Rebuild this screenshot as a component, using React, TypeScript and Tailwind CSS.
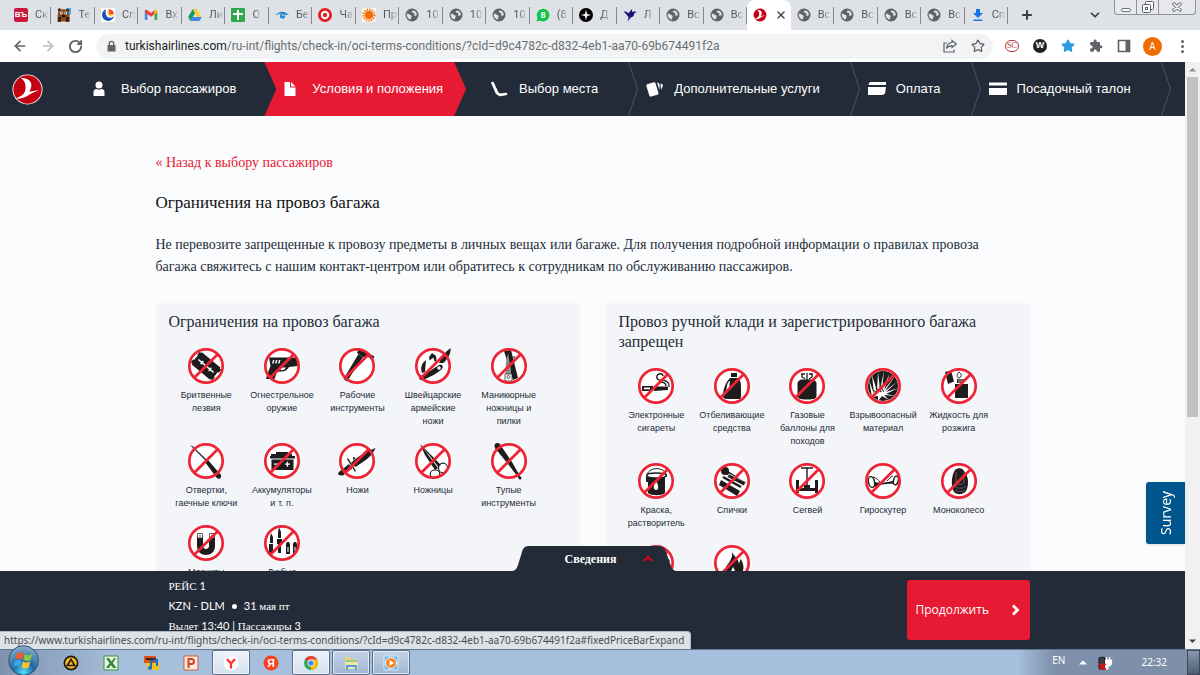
import React from 'react';
import clsx from 'clsx';
import { ArrowLeft, ArrowRight, RotateCw, Lock, Star, ChevronDown, Plus, X } from 'lucide-react';

const PAGE_URL = 'turkishairlines.com/ru-int/flights/check-in/oci-terms-conditions/?cId=d9c4782c-d832-4eb1-aa70-69b674491f2a';
const PAGE_HOST = 'turkishairlines.com';

/* ---------- Favicons ---------- */

const Favicon: React.FC<{ children: React.ReactNode }> = ({ children }) => (
    <svg viewBox="0 0 14 14" className="size-3.5 shrink-0" aria-hidden="true">
        {children}
    </svg>
);

const Globe = () => (
    <Favicon>
        <circle cx="7" cy="7" r="6.5" fill="#5f6368" />
        <path d="M1.8 5.800c1.500-.4 2.500.2 3 1 .5.600 1.800.3 1.900 1.500.1 1-.9 1.200-.7 3.300C3.200 11.400 1.300 8.600 1.800 5.800z" fill="#dee1e6" />
        <path d="M8.500 2.500c-1.700 0-2.300 1.200-1.400 1.900.7.5 1.900.1 2.300 1 .3.900-.8 1-.5 1.900.4.800 1.900.3 2.900-.1.300-2.400-1.200-4.200-3.300-4.700z" fill="#dee1e6" />
    </Favicon>
);

const TurkishMark: React.FC<{ className?: string }> = ({ className }) => (
    <svg viewBox="0 0 32 32" className={className} aria-hidden="true">
        <circle cx="16" cy="16" r="15.500" fill="#fff" />
        <circle cx="16" cy="16" r="14.600" fill="#c40012" />
        <path d="M8.500 3.800c6 .2 11.500 2.500 11.500 7.200 0 3-1 5.200-2.200 7.200 3.500-.3 6-1.200 9.700-1.400-4 1.600-7 3-10.500 5.200-4.500 2.800-8.500 4-14 3.300 5.500-1.500 9.500-4.300 10.600-8C14.500 13 14.500 7 8.500 3.800z" fill="#fff" />
    </svg>
);

const favicons: Record<string, React.ReactNode> = {
    vb: (
        <span className="flex size-3.5 shrink-0 items-center justify-center rounded-[2px] bg-[#c8193c] font-['Liberation_Sans'] text-[8px] leading-none font-bold text-white">
            ВЪ
        </span>
    ),
    bear: (
        <Favicon>
            <path d="M9 0h5v6l-3 2z" fill="#3fa9f5" />
            <circle cx="2.500" cy="2" r="1.700" fill="#3b1d0b" />
            <circle cx="10.500" cy="2.500" r="1.700" fill="#3b1d0b" />
            <path d="M1.500 3C3 .8 10 .8 11.500 3l1 4.500-.7 6H1l-.5-6z" fill="#8a4a1c" />
            <path d="M1 9h3v4.800H.5zM9 9h3.500v4.800H9z" fill="#3b1d0b" />
            <circle cx="4.600" cy="5" r="1.500" fill="#fff" />
            <circle cx="8.600" cy="5" r="1.500" fill="#fff" />
            <circle cx="4.800" cy="5" r=".7" />
            <circle cx="8.400" cy="5" r=".7" />
            <ellipse cx="6.600" cy="8" rx="2" ry="1.400" fill="#2b1407" />
        </Favicon>
    ),
    sputnik: (
        <Favicon>
            <rect width="14" height="14" fill="#fff" />
            <path d="M5 1.300A6 6 0 1 0 13 8c-2 2.400-5.800 2.400-7.300.2C4.300 6 4.300 3.500 5 1.300z" fill="#1751b5" />
            <path d="M7.500 1a6 6 0 0 1 5.600 5.300L8 6.500z" fill="#f4511e" />
            <path d="M6.300 2.500 8 6.600l4.800.2c-2 1.500-5 1.300-6-.6z" fill="#ffb300" />
        </Favicon>
    ),
    gmail: (
        <Favicon>
            <path d="M.8 3v9h2.600V6z" fill="#4285f4" />
            <path d="M13.200 3v9h-2.600V6z" fill="#34a853" />
            <path d="M.8 3.200c0-1.300 1.500-1.800 2.600-1L7 5l3.600-2.800v3.900L7 8.800.8 4.500z" fill="#ea4335" />
            <path d="M10.600 2.200c1.100-.8 2.600-.3 2.600 1v1.300l-2.600 1.900z" fill="#fbbc04" />
        </Favicon>
    ),
    drive: (
        <Favicon>
            <path d="M4.700 1.300h4.600L4.700 9.200 2.400 13 .2 9z" fill="#0f9d58" />
            <path d="M4.700 1.300h4.600L13.800 9H9.300z" fill="#ffcd40" />
            <path d="M4.700 9h9.100l-2.300 4H2.400z" fill="#4285f4" />
        </Favicon>
    ),
    sheet: (
        <Favicon>
            <rect width="14" height="14" rx="1" fill="#2fa84f" />
            <path d="M6 2h2v3h4v2H8v5H6V7H2V5h4z" fill="#fff" />
        </Favicon>
    ),
    eye: (
        <Favicon>
            <path d="M0 7.500C3 4 7 2.800 10 4.300c2 .9 3 2.200 4 2.700-1.500.3-2.700 0-3.800-.5C7.500 5.200 3.500 5.800 0 7.500z" fill="#1e88d2" />
            <circle cx="7.500" cy="8" r="2.600" fill="#1e88d2" />
            <circle cx="8" cy="7.300" r=".9" fill="#dee1e6" />
        </Favicon>
    ),
    target: (
        <Favicon>
            <circle cx="7" cy="7" r="7" fill="#e31e24" />
            <circle cx="7" cy="7" r="4.200" fill="#fff" />
            <circle cx="7" cy="7" r="2.200" fill="#e31e24" />
        </Favicon>
    ),
    sun: (
        <Favicon>
            <rect width="14" height="14" fill="#fdf6ec" />
            <circle cx="7" cy="7" r="5.400" fill="none" stroke="#f2801e" strokeWidth="2.400" strokeDasharray="1.400 1.100" />
            <circle cx="7" cy="7" r="4" fill="#ef6c0a" />
        </Favicon>
    ),
    globe: <Globe />,
    wa: (
        <Favicon>
            <path d="M.6 13.500 1.500 10A6.300 6.300 0 1 1 4 12.600z" fill="#10c34b" />
            <text x="7" y="10.200" textAnchor="middle" fontSize="9" fontWeight="700" fontFamily="Liberation Sans, sans-serif" fill="#fff">8</text>
        </Favicon>
    ),
    spark: (
        <Favicon>
            <circle cx="7" cy="7" r="7" />
            <path d="M7 1.800 8.100 5.900 12.200 7 8.100 8.100 7 12.200 5.900 8.100 1.800 7l4.100-1.100z" fill="#fff" />
        </Favicon>
    ),
    bird: (
        <Favicon>
            <path d="M.5 3.200c2 0 3.700.7 5 2L9 1l.3 3.200 2.200-1 2.300 1-2.500.8c0 2.500-1 4-3.600 4.600L4.500 13.500 5.600 9C4 7.500 3 5.500.5 3.200z" fill="#15157a" />
        </Favicon>
    ),
    thy: <TurkishMark className="size-3.5 shrink-0" />,
    download: (
        <Favicon>
            <path d="M5 1h4v4h3L7 10 2 5h3zM2.500 11.500h9V13h-9z" fill="#1a73e8" />
        </Favicon>
    ),
};

const tabs: { icon: string; label: string; active?: boolean }[] = [
    { icon: 'vb', label: 'Ск' },
    { icon: 'bear', label: 'Те' },
    { icon: 'sputnik', label: 'Сп' },
    { icon: 'gmail', label: 'Вх' },
    { icon: 'drive', label: 'Ли' },
    { icon: 'sheet', label: 'О' },
    { icon: 'eye', label: 'Бе' },
    { icon: 'target', label: 'Ча' },
    { icon: 'sun', label: 'Пр' },
    { icon: 'globe', label: '10' },
    { icon: 'globe', label: '10' },
    { icon: 'globe', label: '10' },
    { icon: 'wa', label: '(8' },
    { icon: 'spark', label: 'Д' },
    { icon: 'bird', label: 'Л' },
    { icon: 'globe', label: 'Вс' },
    { icon: 'globe', label: 'Вс' },
    { icon: 'thy', label: '', active: true },
    { icon: 'globe', label: 'Вс' },
    { icon: 'globe', label: 'Вс' },
    { icon: 'globe', label: 'Вс' },
    { icon: 'globe', label: 'Вс' },
    { icon: 'download', label: 'Сп' },
];

/* ---------- Browser chrome ---------- */

const TabStrip = () => (
    <div className="flex h-[30px] shrink-0 bg-[#dee1e6] pl-2">
        <div className="flex min-w-0 flex-1">
            {tabs.map((tab, i) => (
                <button
                    key={i}
                    className={clsx('flex min-w-0 flex-1 items-center pl-1.5', tab.active && 'rounded-t-lg bg-white')}
                    aria-label={tab.active ? 'Turkish Airlines' : undefined}
                >
                    {favicons[tab.icon]}
                    {tab.active ? (
                        <X className="ml-2 size-3 text-[#45494d]" strokeWidth={3} />
                    ) : (
                        <>
                            <span className="ml-[7px] bg-linear-to-r from-[#4f5357] from-40% to-[#c9ccd1] bg-clip-text font-['Roboto',sans-serif] text-[11px] whitespace-nowrap text-transparent">
                                {tab.label}
                            </span>
                            <span className="ml-auto h-[17px] w-px shrink-0 bg-[#85888d]" />
                        </>
                    )}
                </button>
            ))}
        </div>
        <div className="flex w-[192px] shrink-0 items-center pl-3">
            <button aria-label="Новая вкладка">
                <Plus className="size-3.5 text-[#3c4043]" strokeWidth={3.500} />
            </button>
            <button aria-label="Поиск вкладок" className="ml-[54px]">
                <ChevronDown className="size-3.5 text-[#3c4043]" strokeWidth={3} />
            </button>
            <div className="ml-3 flex h-[15px] w-[82px] self-start rounded-b border border-t-0 border-[#8f9399] bg-[#e6e8ec]">
                <button aria-label="Свернуть" className="flex flex-1 items-end justify-center border-r border-[#8f9399] pb-0.5">
                    <span className="h-1 w-2.5 rounded-xs border border-[#6d7178] bg-white" />
                </button>
                <button aria-label="Развернуть" className="flex flex-1 items-center justify-center border-r border-[#8f9399]">
                    <svg viewBox="0 0 12 12" className="size-3" fill="#fff" stroke="#5d6168">
                        <rect x="3.500" y=".5" width="8" height="8" rx="1" />
                        <rect x=".5" y="3.500" width="8" height="8" rx="1" />
                        <rect x="3.500" y="6.500" width="2" height="2" />
                    </svg>
                </button>
                <button aria-label="Закрыть" className="flex w-9 items-center justify-center">
                    <svg viewBox="0 0 10 10" className="size-2.5" strokeLinecap="round">
                        <path d="m2 2 6 6M8 2 2 8" stroke="#6d7178" strokeWidth="3.400" />
                        <path d="m2 2 6 6M8 2 2 8" stroke="#fff" strokeWidth="1.600" />
                    </svg>
                </button>
            </div>
        </div>
    </div>
);

const Toolbar = () => (
    <div className="flex h-8 shrink-0 items-center bg-white pr-2.5 pl-3 text-[#5f6368]">
        <button aria-label="Назад" className="w-7"><ArrowLeft className="size-4" strokeWidth={2.500} /></button>
        <button aria-label="Вперёд" className="w-7"><ArrowRight className="size-4 text-[#b9bcbf]" strokeWidth={2.500} /></button>
        <button aria-label="Обновить" className="w-7"><RotateCw className="size-[15px]" strokeWidth={3} /></button>
        <div className="flex h-[25px] flex-1 items-center rounded-full bg-[#f1f3f4] pr-2 pl-2.5">
            <svg viewBox="0 0 11 12" className="h-3 w-[11px]" fill="currentColor">
                <path d="M1.500 5h8v6.500h-8z" />
                <path d="M3.300 5V3.500a2.200 2.200 0 0 1 4.400 0V5" fill="none" stroke="currentColor" strokeWidth="1.300" />
            </svg>
            <a href="#" className="ml-2 flex-1 font-['Roboto',sans-serif] text-xs whitespace-nowrap text-[#6a6e72]">
                <span className="text-[#202124]">{PAGE_HOST}</span>
                {PAGE_URL.slice(PAGE_HOST.length)}
            </a>
            <button aria-label="Поделиться">
                <svg viewBox="0 0 14 14" className="size-3.5" fill="none" stroke="currentColor" strokeWidth="1.200">
                    <path d="M4 4H1v9h10v-2.500M9 1.500 13.300 5 9 8.500V6.600C6.500 6.600 4.800 7.500 3.500 9.500 3.800 6 6 3.700 9 3.500z" />
                </svg>
            </button>
            <button aria-label="В закладки" className="ml-3.5"><Star className="size-3.5" strokeWidth={2.200} /></button>
        </div>
        <div className="ml-3 flex items-center gap-3.5">
            <span className="flex h-3 w-3.5 items-center justify-center rounded-full border border-[#b3363a] bg-white font-['Liberation_Serif'] text-[8px] text-[#b3363a]">SC</span>
            <span className="flex size-3.5 items-center justify-center rounded-full bg-[#222] font-['Liberation_Sans'] text-[9px] font-bold text-white">W</span>
            <Star className="size-3.5 fill-[#2f9be0] text-[#2f9be0]" />
            <svg viewBox="0 0 24 24" className="size-3.5" fill="currentColor">
                <path d="M20.500 11H19V7a2 2 0 0 0-2-2h-4V3.500a2.500 2.500 0 0 0-5 0V5H4a2 2 0 0 0-2 2v3.800h1.500a2.700 2.700 0 0 1 0 5.400H2V20a2 2 0 0 0 2 2h3.800v-1.500a2.700 2.700 0 0 1 5.400 0V22H17a2 2 0 0 0 2-2v-4h1.500a2.500 2.500 0 0 0 0-5z" />
            </svg>
            <svg viewBox="0 0 14 14" className="size-3.5" fill="none" stroke="currentColor" strokeWidth="1.600">
                <path d="M1.500 1.500h11v11h-11z" />
                <path d="M10.500 1.500v11" strokeWidth="4" />
            </svg>
        </div>
        <span className="ml-3 flex size-[19px] items-center justify-center rounded-full bg-[#ef6c00] font-['Open_Sans'] text-[10px] text-white">А</span>
        <button aria-label="Меню" className="ml-3 flex w-4 flex-col items-center gap-0.5">
            <span className="size-[3px] rounded-full bg-[#5f6368]" />
            <span className="size-[3px] rounded-full bg-[#5f6368]" />
            <span className="size-[3px] rounded-full bg-[#5f6368]" />
        </button>
    </div>
);

const Scrollbar = () => (
    <div className="flex w-[15px] shrink-0 flex-col items-center bg-[#f1f1f1]">
        <svg viewBox="0 0 15 15" className="h-[15px] w-[15px]"><path d="M4 9.500h7L7.500 6z" fill="#8b8b8b" /></svg>
        <div className="h-[58%] w-[11px] bg-[#c1c1c1]" />
        <svg viewBox="0 0 15 15" className="mt-auto h-[15px] w-[15px]"><path d="M4 5.500h7L7.500 9z" fill="#404040" /></svg>
    </div>
);

/* ---------- Check-in steps ---------- */

const steps = [
    {
        label: 'Выбор пассажиров',
        className: 'pl-[50px] pr-7 gap-4',
        icon: (
            <svg viewBox="0 0 12 16" className="h-4 w-3" fill="#fff">
                <circle cx="6" cy="4" r="3.500" />
                <path d="M.5 15V11c0-2 1.500-3 3-3 1.500 1 3.500 1 5 0 1.500 0 3 1 3 3v4z" />
            </svg>
        ),
    },
    {
        label: 'Условия и положения',
        className: 'pl-5 pr-[23px] -mr-3 gap-4 bg-[#e81932] [clip-path:polygon(0_0,calc(100%-12px)_0,100%_50%,calc(100%-12px)_100%,0_100%,12px_50%)]',
        icon: (
            <svg viewBox="0 0 12 16" className="h-4 w-3" fill="#fff">
                <path d="M.5 1h5.500v5.500h5.500V15H.5z" />
                <path d="m7 1 4.500 4.500H7z" />
            </svg>
        ),
    },
    {
        label: 'Выбор места',
        className: 'pl-[37px] pr-[30px] gap-2.5',
        icon: (
            <svg viewBox="0 0 18 16" className="h-4 w-[18px]" fill="none" stroke="#fff" strokeWidth="2.600" strokeLinecap="round" strokeLinejoin="round">
                <path d="M1.500 2 6 12.200l3 1.700 6-.9" />
                <path d="M2 2.500 7 13" strokeWidth="2" />
            </svg>
        ),
    },
    {
        label: 'Дополнительные услуги',
        className: 'pl-[18px] pr-[30px] gap-2.5',
        icon: (
            <svg viewBox="0 0 18 16" className="h-4 w-[18px]" fill="#fff">
                <rect x="1.500" y="2" width="9.500" height="13" rx="1.500" transform="rotate(-17 6 8)" />
                <path d="M11 1.500c1.500 0 2.500 1 2.600 2.500l-.2 5z" />
                <path d="M14.500 2.500c1.500.3 2.500 1 2.300 2.500L15 9z" />
            </svg>
        ),
    },
    {
        label: 'Оплата',
        className: 'pl-[18px] pr-[30px] gap-2.5',
        icon: (
            <svg viewBox="0 0 18 16" className="h-4 w-[18px]" fill="#fff">
                <path d="M3 1h15v3H.5C.8 2 1.500 1 3 1zM0 6h18l-.7 5c-.4 2.200-1.500 3-3.300 3H1c-.7 0-1-.4-1-1z" />
            </svg>
        ),
    },
    {
        label: 'Посадочный талон',
        className: 'pl-[18px] pr-[30px] gap-2.5',
        icon: (
            <svg viewBox="0 0 18 16" className="h-4 w-[18px]" fill="#fff">
                <path d="M1 1.500h16c.6 0 1 .4 1 1v2H0v-2c0-.6.4-1 1-1zM0 7h18v6c0 .6-.4 1-1 1H1c-.6 0-1-.4-1-1z" />
            </svg>
        ),
    },
];

const StepNav = () => (
    <nav className="flex h-[54px] shrink-0 items-stretch bg-[#232b38] font-['Liberation_Sans',Arial,sans-serif] text-[13px] text-white">
        <a href="#" aria-label="Turkish Airlines" className="flex items-center pl-3">
            <TurkishMark className="size-[31px]" />
        </a>
        {steps.map((step, i) => (
            <a key={step.label} href="#" className={clsx('relative flex items-center whitespace-nowrap', step.className)}>
                {step.icon}
                {step.label}
                {i > 1 && (
                    <svg viewBox="0 0 10 54" className="absolute top-0 -right-2.5 h-full w-2.5" fill="none" stroke="#4a5563">
                        <path d="m.5 0 9 27-9 27" />
                    </svg>
                )}
            </a>
        ))}
    </nav>
);

/* ---------- Restricted items ---------- */

interface Item {
    lines: string[];
    glyph: React.ReactNode;
}

const K = '#1f1c1e';

const Prohibited: React.FC<{ children: React.ReactNode }> = ({ children }) => (
    <svg viewBox="0 0 36 36" className="size-9 overflow-visible" fill={K} aria-hidden="true">
        <circle cx="18" cy="18" r="17" fill="#fff" />
        {children}
        <g fill="none" stroke="#ee2435" strokeWidth="2.700">
            <circle cx="18" cy="18" r="16.700" />
            <path d="m6.300 29.700 23.400-23.400" />
        </g>
    </svg>
);

const baggageItems: Item[] = [
    {
        lines: ['Бритвенные', 'лезвия'],
        glyph: (
            <g transform="rotate(40 18 18)">
                <path d="M4 11h2v-1h24v1h2v4h-1v6h1v4h-2v1H6v-1H4v-4h1v-6H4z" />
                <path d="M8 17.300h4V16h1.500v1.300h9V16H24v1.300h4v1.400h-4V20h-1.500v-1.300h-9V20H12v-1.300H8z" fill="#fff" />
            </g>
        ),
    },
    {
        lines: ['Огнестрельное', 'оружие'],
        glyph: (
            <>
                <path d="M5 9.500h28l1 8.500-9 1c-2 3.500-5 5-9 4.500l-3 .5-2.500 7H2l1-4 3.500-9z" />
                <path d="M9 12h1.500l-1 3.500H8zM12 12h1.500l-1 3.500H11zM15 12h1.500l-1 3.500H14z" fill="#fff" />
                <path d="M16 19.500h6c-1 2-3 3-5.500 2.500z" fill="#fff" />
            </>
        ),
    },
    {
        lines: ['Рабочие', 'инструменты'],
        glyph: (
            <>
                <path d="m4.500 31 3.500 2.500L24 9l-4.500-3z" />
                <path d="M20 0 35.500 8.500 33 12.500l-3.500-3.500L24 9l-6-4z" />
            </>
        ),
    },
    {
        lines: ['Швейцарские', 'армейские', 'ножи'],
        glyph: (
            <>
                <path d="M5 28c8-3 14-8 19-11 3-1 5 1 3 4C22 26 12 30 8 32c-3 1-5-2-3-4z" />
                <path d="M24 15c2-6 6-11 11.500-15 .5 5-2 10-7 15zM7 25c-2-6 0-10 4-13l-1 12zM14 9l3-4 4 3 .5 5-2 .5-1-4-4 3z" />
                <circle cx="24" cy="20" r="1.800" fill="#fff" />
            </>
        ),
    },
    {
        lines: ['Маникюрные', 'ножницы и', 'пилки'],
        glyph: (
            <>
                <path d="m13 3 7-1 7 28-5 2z" />
                <path d="M15 14 17 5l3 17-1 11h-5z" fill="#8b8b8b" />
                <path d="M14 26h7v7h-7z" fill="#fff" stroke={K} strokeWidth=".7" />
                <circle cx="17.500" cy="29" r="1.500" fill="none" stroke={K} strokeWidth=".7" />
                <path d="m22 8 2 0 1 4-2 0z" fill="#777" />
            </>
        ),
    },
    {
        lines: ['Отвертки,', 'гаечные ключи'],
        glyph: (
            <>
                <path d="m2 2 3 1.500L20 18l-1 1z" />
                <path d="m17 19 3-2L33 32c1 4-3 5-5 2z" />
            </>
        ),
    },
    {
        lines: ['Аккумуляторы', 'и т. п.'],
        glyph: (
            <>
                <path d="M12 9h12v2h4v3H7v-3h5zM6 13h25v2.500H6zM7.500 16.500h22V27h-22z" />
                <path d="M10 20.500h5v1.300h-5zM21 20.500h5v1.300h-5zM22.800 18.700h1.300v5h-1.300z" fill="#fff" />
            </>
        ),
    },
    {
        lines: ['Ножи'],
        glyph: (
            <>
                <path d="M12 20C19 13 27 9 36.500 5c-4 9-11 13-20 19z" />
                <path d="m0 29 10-8 3 5-10 6c-3 1-5-1-3-3z" />
                <path d="m9 15 8 13-1 1-8-13zM14 14l3 1-3 2z" />
                <circle cx="3" cy="30" r="2.500" />
            </>
        ),
    },
    {
        lines: ['Ножницы'],
        glyph: (
            <>
                <path d="M5 1 26 22l-3 2z" />
                <path d="m5 1 18 24-3 2L10 12z" />
                <path d="m13 11 10 13" stroke="#fff" strokeWidth=".8" />
                <g fill="none" stroke={K} strokeWidth="1.200">
                    <ellipse cx="28" cy="25" rx="4.500" ry="4.800" />
                    <ellipse cx="20" cy="31" rx="4.800" ry="4" />
                </g>
            </>
        ),
    },
    {
        lines: ['Тупые', 'инструменты'],
        glyph: (
            <>
                <circle cx="6.500" cy="3" r="3" />
                <path d="M4 5 9 1.500 21 19 30 35l-2 .5L17 21z" />
                <circle cx="29" cy="35" r="1.500" />
            </>
        ),
    },
    {
        lines: ['Магниты'],
        glyph: (
            <>
                <path d="M9 11h6v10c0 4 6 4 6 0V11h6v10c0 12-18 12-18 0z" />
                <path d="M9.500 8.500h5V13h-5zM21.500 8.500h5V13h-5z" fill="#fff" stroke={K} strokeWidth=".7" />
                <path d="M12 9.500v2.500M24 9.500v2.500" stroke={K} strokeWidth=".8" />
            </>
        ),
    },
    {
        lines: ['Любые'],
        glyph: (
            <>
                <path d="m7 8 2 4v6H6v-6zM5 19h4v9H5zM15 2l2 5v6h-3V7zM13 14h5v5h-1v9h-3v-9h-1zM22 19c1-3 3-3 4 0v10h-4zM29 19c1-3 3-3 4 0v8l-4 2z" />
                <path d="M23.500 22h1v5h-1zM30.500 22h1v4h-1z" fill="#fff" />
            </>
        ),
    },
];

const carryOnItems: Item[] = [
    {
        lines: ['Электронные', 'сигареты'],
        glyph: (
            <>
                <path d="M4 18h11v5H4zM16 18.500h14V22l-14 1z" />
                <path d="M6 19.500h6v1.800H6z" fill="#fff" />
                <path d="M31 19c1-5-3-6-6-7-4 1-7-1-6-4 1-3 6-3 6 0M28 18c0-3-3-4-6-4" fill="none" stroke={K} strokeWidth="1.300" />
            </>
        ),
    },
    {
        lines: ['Отбеливающие', 'средства'],
        glyph: (
            <>
                <path d="M17 5h6v4h-6zM16 10h8c3 3 3 6 3 10v9c0 2-1 2-3 2H13c-3 0-4-1-4-3 0-7 3-14 7-18z" />
                <path d="M13 18c0-3 2-5 3-5l-1 8-3 2z" fill="#fff" />
            </>
        ),
    },
    {
        lines: ['Газовые', 'баллоны для', 'походов'],
        glyph: (
            <>
                <path d="M12 11.500h12c2 1 3.500 2 3.500 4v12c0 3-2 4-9.500 4s-9.500-1-9.500-4v-12c0-2 1.500-3 3.500-4z" />
                <path d="M13 6v3l3 2M23 6v3l-3 2M18 5v7M12 6h4M20 6h4" fill="none" stroke={K} strokeWidth="1.300" />
            </>
        ),
    },
    {
        lines: ['Взрывоопасный', 'материал'],
        glyph: (
            <>
                <circle cx="18" cy="18" r="15" />
                <path d="M7 29 4 12l5 14L7 7l5 16L13 4l2 18 4-19-2 19 8-17-6 17L30 8 20 23l12-9-11 10 12-4-12 6 10 2-12-1 5 5-7-4-4 5v-5z" fill="#fff" />
                <path d="m8 22 5 3-2-5 5 4-1-6 4 6" fill="none" stroke={K} strokeWidth="1" />
            </>
        ),
    },
    {
        lines: ['Жидкость для', 'розжига'],
        glyph: (
            <>
                <path d="m4 4 6-1.500 3 11L7 16z" />
                <path d="M14 16h13v14H14zM16 11h7v4h-7z" />
                <path d="M17 12h5M17 14h5" stroke="#fff" strokeWidth=".7" />
                <path d="M18 4c3 2 3 5 0 6-3-1-2-4 0-6z" fill="none" stroke={K} />
            </>
        ),
    },
    {
        lines: ['Краска,', 'растворитель'],
        glyph: (
            <>
                <path d="M10 13h17v17c-4 3-13 3-17 0z" />
                <ellipse cx="18.500" cy="12.500" rx="10" ry="2.500" fill="#fff" stroke={K} strokeWidth="1.300" />
                <path d="M9 14C8 3 29 3 28 13" fill="none" stroke={K} />
                <path d="M18 18c3 5 3 9 0 9s-3-4 0-9z" fill="#fff" />
                <path d="M8 14h2v5H8z" />
            </>
        ),
    },
    {
        lines: ['Спички'],
        glyph: (
            <>
                <circle cx="11" cy="8" r="4" />
                <path d="m11 6 20 13-1 2-20-11z" />
                <path d="m15 11 17 8-2 4-17-9z" stroke="#fff" strokeWidth=".8" />
                <path d="m7 17 19 11-3 5L5 22z" />
                <path d="m9 14 18 10" stroke={K} strokeWidth="2.500" />
            </>
        ),
    },
    {
        lines: ['Сегвей'],
        glyph: (
            <>
                <path d="M7 17h3v13H7zM26 17h3v13h-3zM10 25h16v3H10zM15 22h6v3h-6z" />
                <path d="M18 5v20M12 5h12" stroke={K} strokeWidth="1.400" />
            </>
        ),
    },
    {
        lines: ['Гироскутер'],
        glyph: (
            <>
                <path d="M9 19c6 1 14 1 21-2v4c-6-1-14 0-21 3z" />
                <g fill="#fff" stroke={K} strokeWidth="1.400">
                    <ellipse cx="6.500" cy="19" rx="3" ry="5.500" transform="rotate(-12 6.500 19)" />
                    <ellipse cx="31" cy="17.500" rx="2.300" ry="4.500" transform="rotate(12 31 17)" />
                </g>
                <path d="M8 14c4 1 5 3 7 5M28 13c-3 1-4 3-6 5" fill="none" stroke={K} />
            </>
        ),
    },
    {
        lines: ['Моноколесо'],
        glyph: (
            <>
                <path d="M14 7c3-3 8-2 9 1 5 5 5 15 2 20-3 4-9 4-12 1-3-5-3-16 1-22z" />
                <path d="M15 9v11c2 2 6 2 8 0V9M14 23c2 3 8 3 11 0M14 27c3 2 7 2 10 0" fill="none" stroke="#777" strokeWidth=".7" />
            </>
        ),
    },
    {
        lines: [],
        glyph: <path d="M22 8h6v3l4 5-3 2-5-4-2 14H10V14z" />,
    },
    {
        lines: [],
        glyph: (
            <>
                <path d="M18 6c1 5 7 8 7 13l1.500-5c5 6 4 17-5.500 19-10 0-12-9-7-14 3-4 5-8 4-13z" />
                <path d="M19 22c3 4 3 8 0 10-3-3-2-7 0-10z" fill="#fff" />
            </>
        ),
    },
];

const RestrictionCard: React.FC<{ title: string; items: Item[] }> = ({ title, items }) => (
    <section className="flex-1 bg-[#f4f5f9] px-[13px] pt-[9px]">
        <h3 className="font-['Liberation_Serif','Times_New_Roman',serif] text-base leading-5 text-[#232b38]">{title}</h3>
        <ul className="mt-4 mr-5 grid grid-cols-5 gap-y-[15px]">
            {items.map((item, i) => (
                <li key={i} className="flex flex-col items-center gap-[5px] text-center font-['Liberation_Sans',Arial,sans-serif] text-[9px] leading-[13px] whitespace-nowrap text-[#232b38]">
                    <Prohibited>{item.glyph}</Prohibited>
                    <span>
                        {item.lines.map((line) => (
                            <span key={line} className="block">{line}</span>
                        ))}
                    </span>
                </li>
            ))}
        </ul>
    </section>
);

/* ---------- Page footer ---------- */

const FlightBar = () => (
    <footer className="relative h-[78px] shrink-0 bg-[#232b38] text-white">
        <button className="absolute bottom-full left-1/2 -ml-[80px] h-[25px] w-[164px] font-['Liberation_Serif',serif] text-xs font-bold">
            <svg viewBox="0 0 164 25" className="absolute inset-0 size-full" fill="#232b38">
                <path d="M0 25c3-1 4-3 5-6l4-13c1-4 3-6 7-6h129c5 0 7 2 8 6l5 14c1 3 3 5 6 5z" />
            </svg>
            <span className="relative flex items-center justify-center gap-[26px] pl-7">
                Сведения
                <svg viewBox="0 0 10 7" className="h-[7px] w-2.5" fill="none" stroke="#e3001b" strokeWidth="2"><path d="m1 6 4-4 4 4" /></svg>
            </span>
        </button>
        <div className="mx-auto flex h-full max-w-[874px] justify-between overflow-hidden pl-[13px]">
            <div className="pt-[5px] font-['Liberation_Serif',serif] text-[11px] leading-5 whitespace-nowrap">
                <p>РЕЙС <span className="font-['Lato']">1</span></p>
                <p className="flex items-center">
                    <span className="font-['Lato']">KZN - DLM</span>
                    <span className="mx-[7px] size-[5px] rounded-full bg-white" />
                    <span><span className="font-['Lato']">31</span> мая пт</span>
                </p>
                <p>Вылет <span className="font-['Lato']">13:40 |</span> Пассажиры <span className="font-['Lato']">3</span></p>
            </div>
            <button className="mt-[9px] flex h-[60px] w-[123px] items-center justify-between rounded-[3px] bg-[#e81932] px-[9px] font-['Open_Sans',sans-serif] text-xs">
                Продолжить
                <svg viewBox="0 0 10 12" className="h-3 w-2.5" fill="none" stroke="#fff" strokeWidth="2.800"><path d="m2 1.500 4.500 4.500L2 10.500" /></svg>
            </button>
        </div>
    </footer>
);

/* ---------- Windows taskbar ---------- */

const TaskIcon: React.FC<{ label: string; open?: boolean; bright?: boolean; children: React.ReactNode }> = ({ label, open, bright, children }) => (
    <button
        aria-label={label}
        className={clsx(
            'flex h-full w-[38px] items-center justify-center rounded-[2px]',
            open && 'border border-[#5c708a] shadow-[inset_0_0_0_1px_#ffffff99]',
            open && (bright ? 'bg-linear-to-b from-[#eef3fa] to-[#d5e1f0]' : 'bg-linear-to-b from-[#c3d3e7] to-[#9fb6d3]'),
        )}
    >
        <svg viewBox="0 0 16 16" className="size-4">{children}</svg>
    </button>
);

const Taskbar = () => (
    <div className="flex h-[26px] shrink-0 items-stretch border-t border-[#5f7896] bg-linear-to-r from-[#7f93ae] via-[#a6bfdc] via-10% to-[#a6bfdc]">
        <button aria-label="Пуск" className="relative w-[52px]">
            <svg viewBox="0 0 32 32" className="absolute -top-[5px] left-2 size-[31px]">
                <defs>
                    <radialGradient id="orb" cx="50%" cy="90%" r="90%">
                        <stop offset="0" stopColor="#4fe0ff" />
                        <stop offset=".4" stopColor="#1d6aa5" />
                        <stop offset="1" stopColor="#8fb0cc" />
                    </radialGradient>
                </defs>
                <circle cx="16" cy="16" r="15.300" fill="url(#orb)" stroke="#2b4a6c" />
                <path d="M9 9c3-2 5-1.500 7 0l-1.500 6c-2-1.500-4.500-1.500-7 0z" fill="#f1592a" />
                <path d="M17 9.500c2.500 1.500 5 1.500 8-.3l-1.600 6.300c-2.500 1.500-5 1.500-7.700-.2z" fill="#8cc63f" />
                <path d="M7 16.500c3-1.700 5-1.500 7.200 0l-1.600 6c-2-1.500-4.600-1.500-7.200 0z" fill="#35a9e8" />
                <path d="M15.200 17c2.500 1.500 5 1.500 7.800 0l-1.600 6c-2.500 1.700-5.200 1.500-7.700 0z" fill="#fdc52c" />
            </svg>
        </button>
        <div className="flex gap-0.5">
            <TaskIcon label="AIMP">
                <circle cx="8" cy="8" r="7.500" fill="#1e1c18" />
                <circle cx="8" cy="8" r="5.800" fill="#f3b81c" />
                <path d="m8 4.300 3.700 6.200H4.300z" fill="none" stroke="#1e1c18" strokeWidth="1.600" />
            </TaskIcon>
            <TaskIcon label="Excel">
                <path d="M1 1h14v14H1z" fill="#e8f3e4" stroke="#3b8f3e" />
                <path d="M3 3.500 6 3l2.500 3.500L11 3h2L9.800 8l3.700 5H10L8 10l-2 3H3l3.600-5z" fill="#2e8b37" />
            </TaskIcon>
            <TaskIcon label="Медиа">
                <path d="M1 1h12v7H1z" fill="#d9541e" />
                <path d="M3 3h10v2H3z" fill="#3a220f" />
                <path d="M3 8h13v7H5z" fill="#f6c21a" />
                <path d="M8 13V6l6-1v6" fill="none" stroke="#1870c9" strokeWidth="2" />
                <circle cx="7" cy="13" r="2" fill="#1870c9" />
            </TaskIcon>
            <TaskIcon label="PowerPoint">
                <path d="M1 1h14v14H1z" fill="#fbe9e0" stroke="#cf5a33" />
                <path d="M5.500 13V4h2.800c3.600 0 3.600 5 0 5H5.500" fill="none" stroke="#cd4520" strokeWidth="2" />
            </TaskIcon>
            <TaskIcon label="Яндекс Браузер" open bright>
                <circle cx="8" cy="8" r="7.500" fill="#fff" />
                <path d="m4 4 4 4.500L12 4M8 8v5.500" fill="none" stroke="#f33" strokeWidth="2.300" />
            </TaskIcon>
            <TaskIcon label="Яндекс">
                <circle cx="8" cy="8" r="7.500" fill="#fc3f1d" />
                <text x="8" y="11.800" textAnchor="middle" fontSize="10.500" fontWeight="700" fontFamily="Liberation Sans, sans-serif" fill="#fff">Я</text>
            </TaskIcon>
            <TaskIcon label="Chrome" open bright>
                <circle cx="8" cy="8" r="7" fill="#34a853" />
                <path d="M8 8 1.900 4.500A7 7 0 0 1 14.100 4.500z" fill="#ea4335" />
                <path d="M8 8V4.500h6.100A7 7 0 0 1 8 15z" fill="#fbbc04" />
                <circle cx="8" cy="8" r="3.400" fill="#fff" />
                <circle cx="8" cy="8" r="2.600" fill="#4285f4" />
            </TaskIcon>
            <TaskIcon label="Проводник" open>
                <path d="M2 2h5l1 2h6v10H2z" fill="#ead27c" />
                <path d="M3 5h11v3H3z" fill="#8fd18c" />
                <path d="M2 7h13v7H2z" fill="#f5e6a3" />
                <path d="M4 15v-4h9v4" fill="none" stroke="#4ba3e2" strokeWidth="2" />
            </TaskIcon>
            <TaskIcon label="Плеер" open>
                <rect x="1" y="1" width="14" height="14" rx="1" fill="#6cb6ea" stroke="#d8ecfa" />
                <circle cx="8" cy="8" r="5.500" fill="#f58220" stroke="#fff" />
                <path d="m6.500 5 4.500 3-4.500 3z" fill="#fff" />
            </TaskIcon>
        </div>
        <div className="ml-auto flex items-center bg-linear-to-r from-[#a6bfdc] to-[#7d8fa9] to-20% pl-[34px] font-['Noto_Sans',sans-serif] text-[10px] text-white">
            <span className="pb-1">EN</span>
            <svg viewBox="0 0 8 5" className="ml-3.5 h-[5px] w-2"><path d="M0 4.500h8L4 .5z" fill="#fff" /></svg>
            <svg viewBox="0 0 16 16" className="ml-2.5 size-4">
                <path d="M2 3c0-1 6-1 6 0v11H2z" fill="#3a3f46" stroke="#15181c" />
                <path d="M9.500 2v3M12.500 2v3M8 5h6.500v3c0 2-2 3-3.500 3v3H8" fill="#fff" stroke="#fff" strokeWidth="1.200" />
                <path d="m2.500 8.500 6 6M8.500 8.500l-6 6" stroke="#e01010" strokeWidth="2.200" />
            </svg>
            <span className="ml-7">22:32</span>
            <span className="ml-5 h-full w-[13px] border border-[#3d4a5c] bg-linear-to-b from-[#8797ac] to-[#4f5e73]" />
        </div>
    </div>
);

export default function App() {
    return (
        <div className="flex h-screen flex-col overflow-hidden font-['Open_Sans',sans-serif]">
            <TabStrip />
            <Toolbar />
            <div className="relative flex min-h-0 flex-1">
                <div className="relative flex min-w-0 flex-1 flex-col bg-[#fafbfd]">
                    <StepNav />
                    <main className="min-h-0 flex-1 overflow-hidden">
                        <div className="mx-auto max-w-[874px] pt-9 font-['Liberation_Serif','Times_New_Roman',serif] text-[#232b38]">
                            <a href="#" className="block text-sm leading-[22px] text-[#e81932]">« Назад к выбору пассажиров</a>
                            <h2 className="mt-[18px] text-[17px] leading-[22px] text-[#111]">Ограничения на провоз багажа</h2>
                            <p className="mt-5 pr-9 text-sm leading-[22px]">
                                Не перевозите запрещенные к провозу предметы в личных вещах или багаже. Для получения подробной информации о правилах провоза багажа свяжитесь с нашим контакт-центром или обратитесь к сотрудникам по обслуживанию пассажиров.
                            </p>
                            <div className="mt-[25px] flex gap-[26px]">
                                <RestrictionCard title="Ограничения на провоз багажа" items={baggageItems} />
                                <RestrictionCard title="Провоз ручной клади и зарегистрированного багажа запрещен" items={carryOnItems} />
                            </div>
                        </div>
                    </main>
                    <FlightBar />
                    <button className="absolute right-0 bottom-[105px] flex h-[62px] w-[39px] items-center justify-center rounded-l-[3px] bg-[#00558c] font-['Noto_Sans',sans-serif] text-sm text-white shadow">
                        <span className="rotate-180 [writing-mode:vertical-rl]">Survey</span>
                    </button>
                </div>
                <Scrollbar />
                <div className="absolute bottom-0 left-0 rounded-tr border-t border-r border-[#b4b8be] bg-[#dee1e6] pr-1.5 pl-1 font-['Noto_Sans',sans-serif] text-[10px] leading-[17px] whitespace-nowrap text-[#4a4d51]">
                    https://www.{PAGE_URL}#fixedPriceBarExpand
                </div>
            </div>
            <Taskbar />
        </div>
    );
}
